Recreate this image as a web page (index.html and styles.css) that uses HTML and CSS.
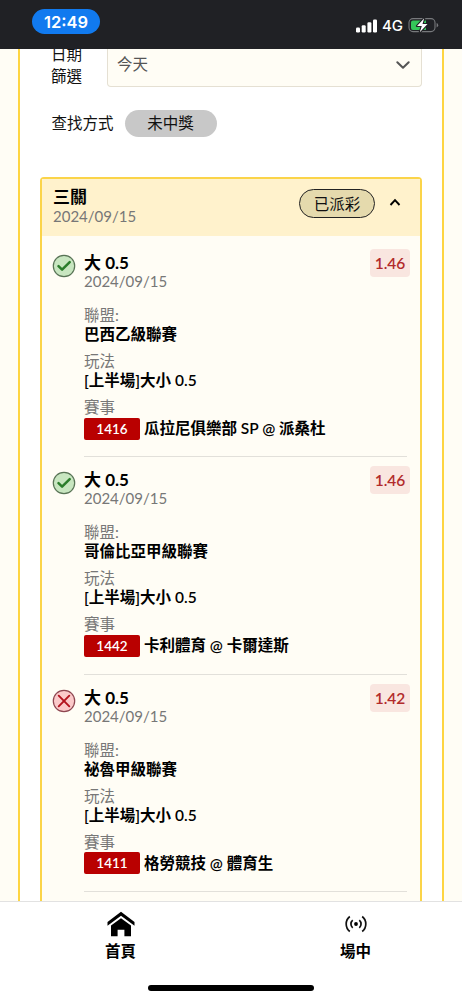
FILE: index.html
```
<!DOCTYPE html>
<html lang="zh-Hant">
<head>
<meta charset="utf-8">
<title>投注記錄</title>
<link rel="stylesheet" href="styles.css">
</head>
<body>
<div class="screen">
  <header class="status">
    <span class="clock">12:49</span>
    <div class="signals">
      <svg class="bars" width="22" height="14" viewBox="0 0 22 14"><rect x="0" y="8.6" width="4" height="4.8" rx="1.2"/><rect x="5.7" y="6.2" width="4" height="7.2" rx="1.2"/><rect x="11.4" y="3.2" width="4" height="10.2" rx="1.2"/><rect x="17" y="0.4" width="4" height="13" rx="1.2"/></svg>
      <span class="network">4G</span>
      <svg class="battery" width="31" height="16" viewBox="0 0 31 16"><rect x="1" y="1.6" width="26" height="13" rx="4" fill="none" stroke="#77797c" stroke-width="1.1"/><path d="M5 3.5h13v9.4H5a2 2 0 0 1-2-2V5.500a2 2 0 0 1 2-2z" fill="#34c759"/><path d="M28.600 6v4.400q1.600-.6 1.600-2.200T28.600 6z" fill="#77797c"/><path d="M16.200 1.200L9 9h4.800l-2 6.200L19.500 7h-5z" fill="#fff" stroke="#202125" stroke-width="2.200" stroke-linejoin="round" paint-order="stroke"/></svg>
    </div>
  </header>
  <main class="viewport">
    <div class="panel">
      <div class="filter">
        <div class="filter-label">日期<br>篩選</div>
        <div class="select"><span>今天</span><svg width="16" height="10" viewBox="0 0 16 10"><path d="M2.300 2.200L8 7.800l5.700-5.600" fill="none" stroke="#555" stroke-width="2" stroke-linecap="round" stroke-linejoin="round"/></svg></div>
      </div>
      <div class="method"><span>查找方式</span><span class="chip">未中獎</span></div>
      <section class="card">
        <div class="card-head">
          <div><div class="title">三關</div><div class="date">2024/09/15</div></div>
          <span class="settled">已派彩</span>
          <svg class="caret" width="12" height="9" viewBox="0 0 12 9"><path d="M1.500 7L6 2.200 10.500 7" fill="none" stroke="#000" stroke-width="1.900"/></svg>
        </div>
        <article class="entry">
          <svg class="mark" width="24" height="24" viewBox="0 0 24 24"><circle cx="12" cy="12" r="10.700" fill="#c8e6c0" stroke="#587355" stroke-width="1.200"/><path d="M6.500 12.200l3.600 3.500 7.600-7.600" fill="none" stroke="#2b7d2b" stroke-width="2.500" stroke-linecap="round" stroke-linejoin="round"/></svg>
          <div class="body">
            <div class="title">大 0.5</div><div class="date">2024/09/15</div>
            <div class="group first"><div class="label">聯盟:</div><div class="value">巴西乙級聯賽</div></div>
            <div class="group"><div class="label">玩法</div><div class="value">[上半場]大小 0.5</div></div>
            <div class="group"><div class="label">賽事</div><div class="match"><span class="code">1416</span><span class="value">瓜拉尼俱樂部 SP @ 派桑杜</span></div></div>
          </div>
          <span class="odds">1.46</span>
        </article>
        <article class="entry">
          <svg class="mark" width="24" height="24" viewBox="0 0 24 24"><circle cx="12" cy="12" r="10.700" fill="#c8e6c0" stroke="#587355" stroke-width="1.200"/><path d="M6.500 12.200l3.600 3.500 7.600-7.600" fill="none" stroke="#2b7d2b" stroke-width="2.500" stroke-linecap="round" stroke-linejoin="round"/></svg>
          <div class="body">
            <div class="title">大 0.5</div><div class="date">2024/09/15</div>
            <div class="group first"><div class="label">聯盟:</div><div class="value">哥倫比亞甲級聯賽</div></div>
            <div class="group"><div class="label">玩法</div><div class="value">[上半場]大小 0.5</div></div>
            <div class="group"><div class="label">賽事</div><div class="match"><span class="code">1442</span><span class="value">卡利體育 @ 卡爾達斯</span></div></div>
          </div>
          <span class="odds">1.46</span>
        </article>
        <article class="entry">
          <svg class="mark" width="24" height="24" viewBox="0 0 24 24"><circle cx="12" cy="12" r="10.700" fill="#fbc9c9" stroke="#8e4650" stroke-width="1.200"/><path d="M6.700 6.700l10.600 10.600M17.300 6.700L6.700 17.300" fill="none" stroke="#b3121d" stroke-width="1.900" stroke-linecap="round"/></svg>
          <div class="body">
            <div class="title">大 0.5</div><div class="date">2024/09/15</div>
            <div class="group first"><div class="label">聯盟:</div><div class="value">祕魯甲級聯賽</div></div>
            <div class="group"><div class="label">玩法</div><div class="value">[上半場]大小 0.5</div></div>
            <div class="group"><div class="label">賽事</div><div class="match"><span class="code">1411</span><span class="value">格勞競技 @ 體育生</span></div></div>
          </div>
          <span class="odds">1.42</span>
        </article>
      </section>
    </div>
  </main>
  <nav class="tabs">
    <div class="tab home"><svg width="28" height="26" viewBox="0 0 28 26"><path d="M14 .8L27.500 11v3.800L14 4.700.5 14.800V11z"/><path d="M14 7.200l10 7.300v10.700h-6.600v-6.500h-6.800v6.500H4V14.500z"/></svg><span>首頁</span></div>
    <div class="tab live"><svg width="22" height="18" viewBox="0 0 22 18"><circle cx="11" cy="9" r="1.900"/><path d="M7.700 5.100a5.200 5.200 0 0 0 0 7.800M14.300 5.100a5.200 5.200 0 0 1 0 7.800M4.800 1.500a9.600 9.600 0 0 0 0 15M17.200 1.500a9.600 9.600 0 0 1 0 15" fill="none" stroke="#111" stroke-width="1.700"/></svg><span>場中</span></div>
    <div class="indicator"></div>
  </nav>
</div>
</body>
</html>
```
FILE: styles.css
```
* { box-sizing: border-box; }
body { margin: 0; font-family: Lato, "Noto Sans CJK TC", sans-serif; font-size: 15.5px; color: #111; }
.screen { width: 462px; height: 1000px; display: flex; flex-direction: column; overflow: hidden; background: #fff; }
.status { height: 49px; flex: none; background: #202125; color: #fff; display: flex; justify-content: space-between; padding: 9px 23px 0 32px; font-family: Inter, sans-serif; }
.clock { width: 68px; height: 25px; border-radius: 13px; background: #117aef; text-align: center; font-weight: 600; font-size: 16.5px; line-height: 26px; }
.signals { display: flex; align-items: flex-start; padding-top: 8px; }
.bars { fill: #fff; margin: 2px 4px 0 0; }
.network { font-size: 15px; font-weight: 500; line-height: 18px; width: 26px; }
.viewport { height: 852px; flex: none; overflow: hidden; background: #fffdf5; padding: 0 18px; }
.panel { height: 100%; border: solid #fed542; border-width: 0 2px; background: #fff; padding: 0 20px; }
.filter { display: flex; height: 38px; padding-left: 11px; }
.filter-label { width: 56px; line-height: 22px; margin-top: -6px; }
.select { flex: 1; display: flex; justify-content: space-between; align-items: center; border: 1px solid #e5e0d3; border-top: 0; border-radius: 0 0 4px 4px; background: #fffdf5; padding: 0 10px 5px 9px; color: #555; }
.select span { line-height: 20px; padding-bottom: 2px; }
.method { display: flex; align-items: center; gap: 11px; height: 27px; margin: 23px 0 40px; padding-left: 11.5px; line-height: 27px; }
.chip { width: 92px; height: 27px; border-radius: 14px; background: #c8c8c8; text-align: center; }
.card { border: 2px solid #fbd449; border-radius: 4px; background: #fffdf5; height: 760px; }
.card-head { display: flex; height: 57px; background: #fff2cc; padding: 8px 19px 0 11px; margin-bottom: 4px; }
.title { font-size: 17px; font-weight: 700; line-height: 20px; color: #000; }
.date { font-size: 15px; line-height: 18px; color: #777; }
.settled { margin: 2px 14px 0 auto; width: 76px; height: 29px; border: 1px solid #222; border-radius: 15px; background: #e5daad; line-height: 28px; text-align: center; }
.caret { margin-top: 11px; }
.entry { display: flex; height: 217.4px; padding: 0 10px 0 10px; }
.mark { flex: none; margin: 14px 8px 0 0; width: 24px; }
.body { flex: 1; height: 217.4px; padding-top: 13px; border-bottom: 1px solid #e2e0da; margin-right: -37px; padding-right: 37px; white-space: nowrap; }
.body .date { margin-top: -1px; }
.group { margin-top: 8px; }
.group.first { margin-top: 16px; }
.label { line-height: 19px; color: #777; }
.value { line-height: 19px; font-weight: 600; color: #000; }
.match { display: flex; align-items: center; gap: 4px; height: 23px; }
.code { width: 56px; height: 22px; border-radius: 2px; background: #b90000; color: #fff; font-size: 13.5px; line-height: 22px; font-weight: 600; text-align: center; }
.odds { flex: none; width: 40px; height: 28px; margin-top: 9px; border-radius: 4px; background: #f9e6e0; color: #b22b2b; font-weight: 600; font-size: 15.5px; line-height: 29px; text-align: center; }
.tabs { height: 99px; flex: none; border-top: 1px solid #e2e2e2; display: grid; grid-template-columns: 227px 227px; grid-template-rows: 83px 6px; padding: 0 4px 0 7px; background: #fff; }
.tab { display: flex; flex-direction: column; align-items: center; font-weight: 600; color: #000; line-height: 20px; }
.home { padding-top: 9px; gap: 4px; }
.live { padding: 13px 0 0 16px; gap: 8px; }
.indicator { grid-column: 1 / 3; width: 166px; height: 6px; border-radius: 3px; background: #000; margin-left: 141px; }
```
